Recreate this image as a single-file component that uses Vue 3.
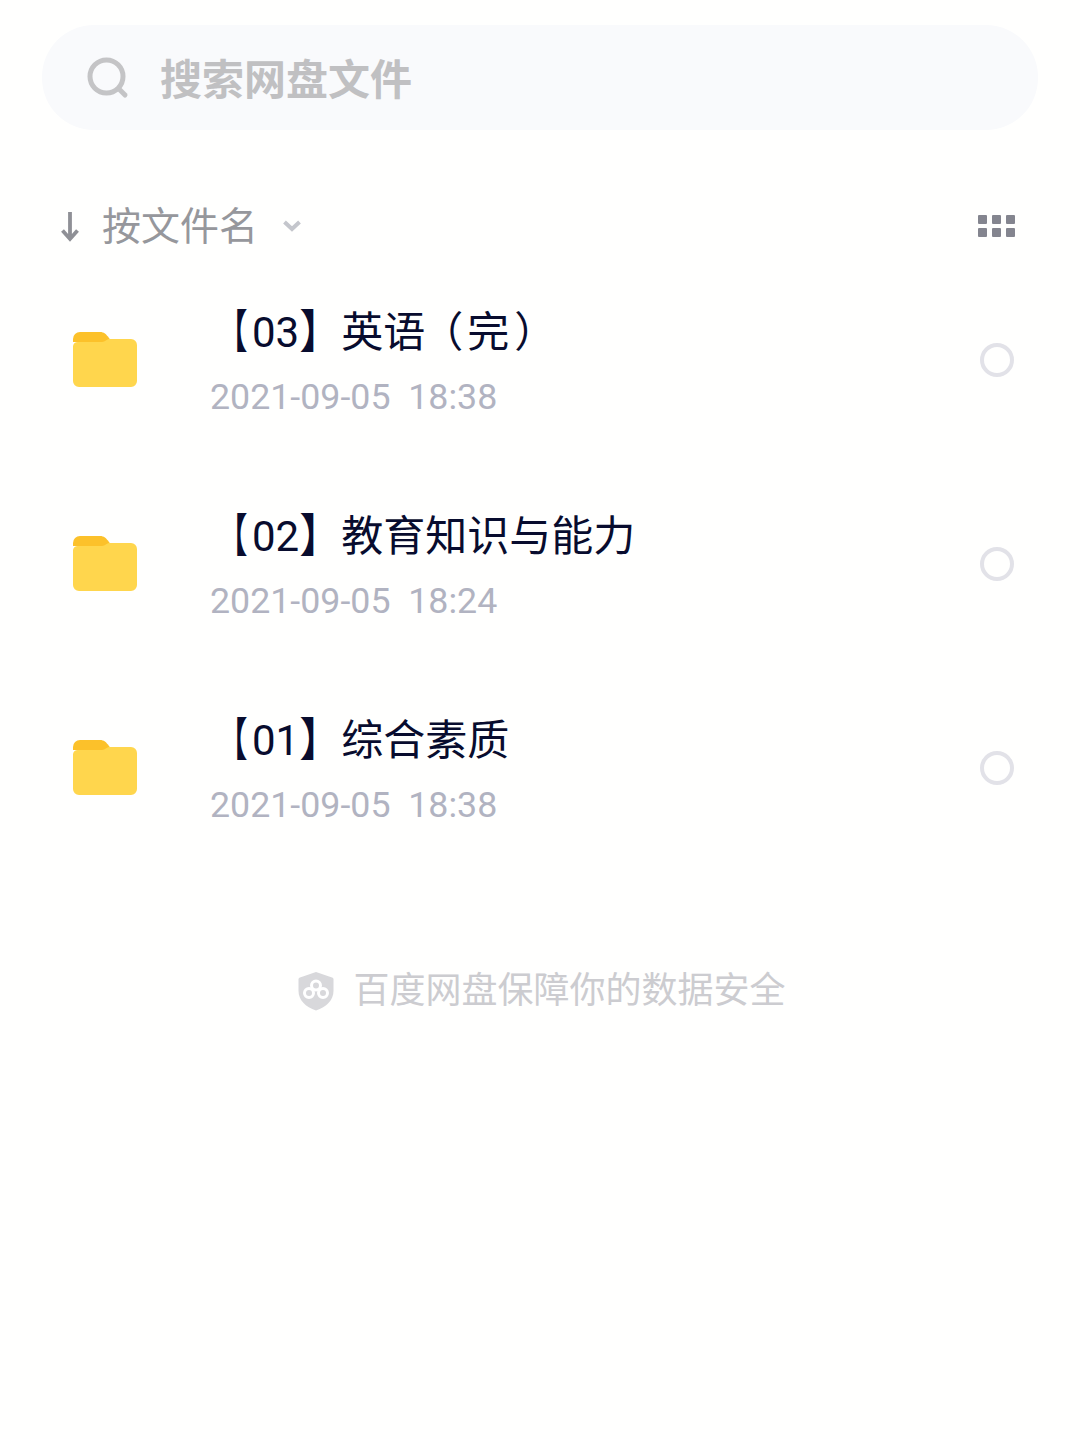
<template>
  <div class="page">
    <div class="search">
      <svg class="search-icon" width="42" height="42" viewBox="0 0 42 42" fill="none">
        <circle cx="19.5" cy="19.500" r="16.500" stroke="#c4c4c6" stroke-width="5" />
        <path d="M32 32l6 6" stroke="#c4c4c6" stroke-width="5" stroke-linecap="round" />
      </svg>
      <span class="search-text">搜索网盘文件</span>
    </div>

    <div class="toolbar">
      <svg class="sort-arrow" width="20" height="32" viewBox="0 0 20 32" fill="none">
        <path d="M10 2v27M2.500 20.500l7.500 8.500 7.500-8.500" stroke="#8f9096" stroke-width="3.800" />
      </svg>
      <span class="sort-text">按文件名</span>
      <svg class="chevron" width="20" height="14" viewBox="0 0 20 14" fill="none">
        <path d="M2.5 3l7.500 7 7.500-7" stroke="#c4c6cc" stroke-width="4" />
      </svg>
      <div class="grid-icon">
        <i v-for="n in 6" :key="n"></i>
      </div>
    </div>

    <div class="list">
      <div v-for="f in files" :key="f.num" class="row">
        <svg class="folder" width="64" height="56" viewBox="0 0 64 56">
          <path d="M0 7a7 7 0 0 1 7-7h20c4 0 6 2 9 6l3 4H0z" fill="#fcc12a" />
          <path d="M0 14a5 5 0 0 1 5-4h24c3 0 5-3 7-3h22a6 6 0 0 1 6 6v36a6 6 0 0 1-6 6H6a6 6 0 0 1-6-6z" fill="#ffd64d" />
        </svg>
        <div class="info">
          <div class="name"><span class="bracket-l">【</span>{{ f.num }}<span class="bracket-r">】</span>{{ f.title }}<template v-if="f.note"><span class="paren-l">（</span>{{ f.note }}<span class="paren-r">）</span></template></div>
          <div class="date">{{ f.date }}</div>
        </div>
        <div class="radio"></div>
      </div>
    </div>

    <div class="footer">
      <svg class="shield" width="36" height="40" viewBox="0 0 36 40">
        <path d="M18 1l16 5.500c1 .4 1.500 1 1.500 2V20c0 9-7 16-17.500 19.500C7.500 36 .5 29 .5 20V8.500c0-1 .5-1.600 1.500-2z" fill="#d8d8db" />
        <g fill="none" stroke="#fff" stroke-width="3">
          <circle cx="18" cy="14.500" r="4.500" />
          <circle cx="11" cy="22" r="4.500" />
          <circle cx="25" cy="22" r="4.500" />
        </g>
      </svg>
      <span class="footer-text">百度网盘保障你的数据安全</span>
    </div>
  </div>
</template>

<script setup>
const files = [
  { num: '03', title: '英语', note: '完', date: '2021-09-05  18:38' },
  { num: '02', title: '教育知识与能力', date: '2021-09-05  18:24' },
  { num: '01', title: '综合素质', date: '2021-09-05  18:38' },
]
</script>

<style>
html,
body {
  background: #fffffe;
}
</style>

<style scoped>
.page {
  width: 1080px;
  height: 1439px;
  box-sizing: border-box;
  padding-top: 25px;
  overflow: hidden;
  font-family: Roboto, "Noto Sans CJK SC", sans-serif;
  background: #fffffe;
}
.search {
  margin: 0 42px;
  height: 105px;
  border-radius: 52px;
  background: #f9fafc;
  display: flex;
  align-items: center;
  padding-left: 45px;
}
.search-icon {
  flex: none;
}
.search-text {
  margin-left: 31px;
  padding-top: 6px;
  font-size: 42px;
  font-weight: 700;
  color: #c0c0c2;
  line-height: 1;
}
.toolbar {
  margin-top: 68px;
  height: 56px;
  display: flex;
  align-items: center;
  padding-left: 60px;
  padding-right: 65px;
}
.sort-text {
  margin-left: 22px;
  padding-top: 2px;
  font-size: 39px;
  color: #96979c;
  line-height: 1;
}
.chevron {
  margin-left: 24px;
}
.grid-icon {
  margin-left: auto;
  display: grid;
  grid-template-columns: repeat(3, 9px);
  grid-auto-rows: 9px;
  column-gap: 5px;
  row-gap: 4px;
}
.grid-icon i {
  background: #84858f;
  border-radius: 1px;
}
.list {
  margin-top: 4px;
}
.row {
  height: 204px;
  display: flex;
  align-items: center;
  padding-left: 73px;
  padding-right: 66px;
}
.info {
  margin-left: 73px;
  padding-top: 4px;
  flex: 1;
}
.name {
  font-size: 42px;
  line-height: 56px;
  color: #080c2e;
}
/* the original font centres its fullwidth punctuation, Noto doesn't */
.bracket-l,
.bracket-r {
  display: inline-block;
}
.bracket-l {
  transform-origin: 25px 50%;
  transform: scale(0.75, 1.1);
}
.bracket-r {
  transform: scaleY(1.1);
}
.paren-l,
.paren-r {
  font-feature-settings: "halt";
}
.paren-l {
  margin-left: 17px;
  margin-right: 4px;
}
.paren-r {
  margin-left: 5px;
  margin-right: 16px;
}
.date {
  margin-top: 14px;
  font-size: 35.75px;
  line-height: 44px;
  color: #b1b3c1;
  white-space: pre;
}
.radio {
  width: 34px;
  height: 34px;
  box-sizing: border-box;
  border: 4.500px solid #e2e2e8;
  border-radius: 50%;
}
.footer {
  margin-top: 96px;
  display: flex;
  align-items: center;
  justify-content: center;
  height: 50px;
  padding-left: 4px;
}
.footer-text {
  margin-left: 19px;
  font-size: 36px;
  color: #ccccd0;
  line-height: 1;
}
</style>
